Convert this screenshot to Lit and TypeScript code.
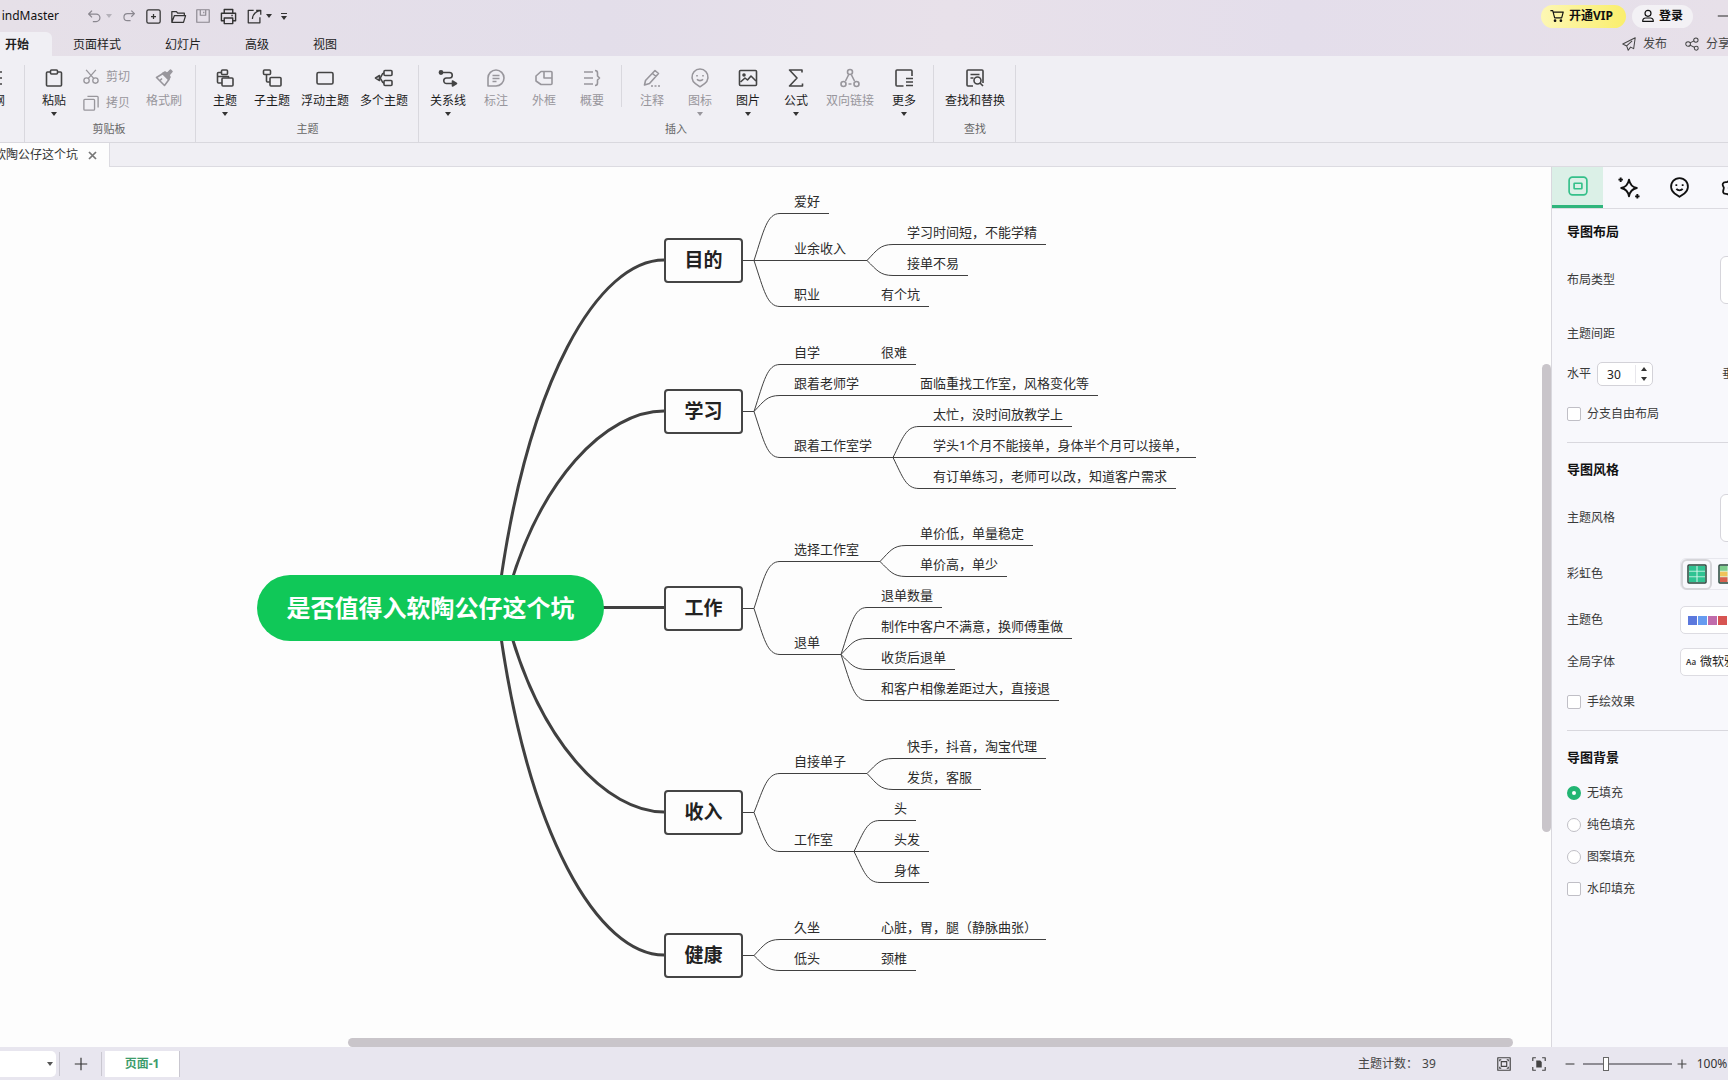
import { LitElement, html, svg, css, nothing, type TemplateResult } from "lit";
import { customElement, property } from "lit/decorators.js";
import { classMap } from "lit/directives/class-map.js";

/* ---------- icons, drawn on an 18 unit grid ---------- */

const ICONS: Record<string, TemplateResult> = {
  undo: svg`<path d="M6 2 2 6l4 4M2 6h9a4.500 4.500 0 0 1 0 9H7"/>`,
  redo: svg`<path d="m12 2 4 4-4 4M16 6H7a4.500 4.500 0 0 0 0 9h4"/>`,
  newFile: svg`<rect x="1" y="1" width="16" height="16" rx="2"/><path d="M9 6v6M6 9h6"/>`,
  folder: svg`<path d="M1 16V3h5.500L8 5h8v3M1 16 4 8h13.500L15 16z"/>`,
  save: svg`<path d="M1 1h16v16H1zM5.500 1v7h7V1M10 3.500v2"/>`,
  print: svg`<path d="M4.500 5.500v-4h9v4M4.500 13.500h-3v-8h15v8h-3M4.500 10.500h9v6h-9zM12 8h1.500"/>`,
  exportFile: svg`<path d="M8 1.500H1.500v15h14V10M11 1.500h5.500V7M16 2C10 3 7 6 6.500 12"/>`,
  outline: svg`<path d="M2 3h16M2 9h16M2 15h16"/>`,
  paste: svg`<path d="M5.500 3H2.500a1 1 0 0 0-1 1v12a1 1 0 0 0 1 1h13a1 1 0 0 0 1-1V4a1 1 0 0 0-1-1h-3"/><rect x="5.500" y="1" width="7" height="4" rx="1"/>`,
  cut: svg`<circle cx="4" cy="13" r="3"/><circle cx="14" cy="13" r="3"/><path d="M3.500 1 12 10.500M14.500 1 6 10.500"/>`,
  copy: svg`<rect x="1" y="5" width="12" height="12" rx="1"/><path d="M5 1.500h11a1 1 0 0 1 1 1V14"/>`,
  brush: svg`<path d="M1.500 8.500 9.500 16.500l4.500-6-6-6z"/><path d="M7.500 4.500 10 3l2 1.500L15.500 1l1.500 1.500L14 6l1 2-1.500 2.500z" fill="currentColor"/><path d="M5 11.500 7 9.500"/>`,
  topic: svg`<path d="M5.500 3.500H2.500a1 1 0 0 0-1 1V13a1 1 0 0 0 1 1H6"/><rect x="5.500" y="1" width="6" height="4.500" rx="1"/><rect x="6" y="9" width="11" height="8" rx="1"/><path d="M2 7.500h10.500V9"/>`,
  subtopic: svg`<rect x="0.500" y="1" width="7" height="4.500" rx="1"/><path d="M3.500 5.500V12a1 1 0 0 0 1 1H7"/><rect x="7" y="8.500" width="11" height="8.500" rx="1"/>`,
  floating: svg`<rect x="1" y="3.500" width="16" height="11.500" rx="1.500"/>`,
  multi: svg`<path d="M4.500 6.500 0.500 9l4 2.500z"/><path d="M4.500 9C7 9 6 4 9 4M4.500 9C7 9 6 14 9 14"/><rect x="9" y="1.500" width="8" height="5" rx="1"/><rect x="9" y="11.500" width="8" height="5" rx="1"/>`,
  relation: svg`<circle cx="2" cy="3.500" r="1.600" fill="currentColor"/><path d="M2 3.500h8.500a2.700 2.700 0 0 1 0 5.500H7.500a2.700 2.700 0 0 0 0 5.500H14"/><path d="M13.500 12v5l4-2.500z" fill="currentColor"/>`,
  callout: svg`<path d="M1 17V9a8 8 0 1 1 8 8zM5.500 6.500h7M5.500 9.500h7M5.500 12.500h4"/>`,
  boundary: svg`<path d="M6 2.500h10a1 1 0 0 1 1 1v11a1 1 0 0 1-1 1H6L1 12V7zM9 2.500V9h8"/>`,
  summary: svg`<path d="M1 3h9M1 9h9M1 15h9M12 1.500c2 0 2.500.8 2.500 2.500v3l2 2-2 2v3c0 1.700-.5 2.500-2.500 2.500"/>`,
  note: svg`<path d="M1.500 16l1-4.500L12 1.500l3.500 3L6.500 14.500zM9.500 4.500 13 7.500"/><path d="M8 17h10" stroke-dasharray="2 1.500"/>`,
  pin: svg`<path d="M9 17.800 4.400 14.600A8 8 0 1 1 13.600 14.600z"/><path d="M6 6v1.500M12 6v1.500M6 10.300c1.500 1.800 4.500 1.800 6 0"/>`,
  image: svg`<rect x="0.500" y="1.500" width="17" height="15" rx="1"/><circle cx="5" cy="6" r="1" fill="currentColor"/><path d="M1.500 13 6 9l2.500 2 3.500-4 5 5"/>`,
  formula: svg`<path d="M15 3.500V1H2.500L10 9l-7.500 8H15.500v-2.500"/>`,
  link: svg`<circle cx="9" cy="3" r="2.500"/><circle cx="2.500" cy="15" r="2.500"/><circle cx="15.500" cy="15" r="2.500"/><path d="M7.500 6 4.500 12M10.500 6l3 6M7.500 15h3"/>`,
  more: svg`<path d="M8.500 17H2a1 1 0 0 1-1-1V2a1 1 0 0 1 1-1h14a1 1 0 0 1 1 1v5M11 9.500h7M11 13h7M11 16.500h7"/>`,
  find: svg`<path d="M7 17H2a1 1 0 0 1-1-1V2a1 1 0 0 1 1-1h14a1 1 0 0 1 1 1v12M4.500 5.500h9M4.500 9h3"/><circle cx="11.500" cy="11.500" r="3.500"/><path d="m14 14 3 3"/>`,
  cart: svg`<path d="M0.500 2h3l2.500 9.500h9L17 4H4.500"/><circle cx="6.500" cy="15" r="1" fill="currentColor"/><circle cx="14" cy="15" r="1" fill="currentColor"/>`,
  user: svg`<circle cx="9" cy="5" r="4.500"/><path d="M1 17c0-3.500 2-5 4.500-5h7c2.500 0 4.500 1.500 4.500 5z"/>`,
  send: svg`<path d="M17 1 1 9l5 2.500L8 17l3-4 4 2zM6 11.500 13 5"/>`,
  share: svg`<circle cx="4" cy="9" r="3"/><circle cx="14" cy="4" r="2.800"/><circle cx="14.500" cy="14.500" r="2.500"/><path d="m6.500 7.500 5-2.500M6.500 10.500l6 3"/>`,
  minimise: svg`<path d="M1 9h16"/>`,
  layout: svg`<rect x="1" y="1" width="16" height="16" rx="3"/><rect x="5.500" y="6.500" width="7" height="5" rx="0.500"/>`,
  spark: svg`<path d="M9 1.500c.8 4.500 3 6.700 7 7.500-4 .8-6.200 3-7 7.500-.8-4.500-3-6.700-7-7.500 4-.8 6.200-3 7-7.500z"/><path d="M1.500-.5v4M-.5 1.500h4M16.500 14.500v4M14.500 16.500h4"/>`,
  flower: svg`<path d="M9 1.500c2 0 2.500 1.500 3.500 2 1.500.3 3.500 0 4 2 .5 1.500-.8 2.500-1 3.500.2 1 1.500 2.500.5 4.500-1 1.500-3 .5-4 1-1 .7-1.500 2-3 2s-2-1.500-3-2c-1.500-.5-3.500.3-4-1.500-.5-1.800.8-3 .5-4.500-.5-1-1.500-2-.8-3.500.8-1.500 2.800-1 4-1.500 1-.5 1.500-2 3.300-2z"/><circle cx="9" cy="9" r="2"/>`,
  fit: svg`<rect x="1" y="1" width="16" height="16"/><rect x="5.500" y="6" width="7" height="6"/><path d="M3.500 5.500v-2h2M14.500 5.500v-2h-2M3.500 12.500v2h2M14.500 12.500v2h-2"/>`,
  focus: svg`<path d="M1 5V1h4M13 1h4v4M17 13v4h-4M5 17H1v-4"/><path d="M5.500 4.500h5l2 2v7h-7z" fill="currentColor" stroke="none"/>`,
  plus: svg`<path d="M9 1v16M1 9h16"/>`,
  minus: svg`<path d="M1 9h16"/>`,
  close: svg`<path d="m2 2 14 14M16 2 2 16"/>`,
};

const icon = (name: string, size = 18, stroke = 1.5) => html`<svg
  width=${size}
  height=${size}
  viewBox="0 0 18 18"
  fill="none"
  stroke="currentColor"
  stroke-width=${stroke}
  stroke-linejoin="round"
  overflow="visible"
  aria-hidden="true"
>${ICONS[name]}</svg>`;

const FONT = css`
  :host {
    font-family: "Noto Sans", "Noto Sans CJK SC", sans-serif;
    font-size: 12px;
    line-height: 16px;
    color: #222;
  }
  * {
    box-sizing: border-box;
  }
  svg {
    display: block;
    flex: none;
  }
  button {
    font: inherit;
    color: inherit;
    background: none;
    border: 0;
    padding: 0;
    margin: 0;
    white-space: nowrap;
  }
  .caret {
    width: 0;
    height: 0;
    border: 3px solid transparent;
    border-top: 4px solid currentColor;
    border-bottom: 0;
    flex: none;
  }
`;

/* ---------- title bar ---------- */

@customElement("title-bar")
class TitleBar extends LitElement {
  static styles = [
    FONT,
    css`
      :host {
        display: block;
        background: linear-gradient(90deg, #e6e0e8, #e3deea 35%, #e8e1ea 55%, #e4deeb 75%, #e7e0e9);
      }
      .row {
        display: flex;
        align-items: center;
        justify-content: space-between;
        height: 32px;
      }
      .tabs {
        height: 24px;
      }
      .left,
      .right,
      .quick {
        display: flex;
        align-items: center;
        flex: none;
      }
      .name {
        width: 59px;
        text-align: right;
        color: #111;
        margin-right: 28px;
      }
      .quick {
        gap: 10px;
        color: #333;
      }
      .quick button {
        display: flex;
        align-items: center;
        gap: 4px;
      }
      .dim {
        color: #8a878f;
      }
      .faint {
        color: #b5b2ba;
      }
      .quick .overflow {
        border-top: 1px solid #333;
        padding-top: 2px;
        margin-left: -1px;
      }
      .right {
        width: 187px;
        overflow: hidden;
      }
      .pill {
        display: flex;
        align-items: center;
        gap: 5px;
        height: 23px;
        border-radius: 12px;
        padding: 0 10px;
        background: #f3f1f5;
        font-weight: 700;
        color: #111;
        margin-right: 6px;
        flex: none;
      }
      .vip {
        background: linear-gradient(90deg, #fdf7b4, #faee6c);
        padding: 0 13px 0 9px;
      }
      .minimise {
        margin-left: 18px;
        color: #444;
      }
      nav {
        display: flex;
        height: 24px;
      }
      nav button {
        padding: 2px 22px 0;
        color: #222;
      }
      nav .active {
        padding: 2px 23px 0 5px;
        margin-right: -1px;
        font-weight: 700;
        background: #f0eff4;
        border-radius: 0 6px 0 0;
      }
      .share {
        width: 106px;
        gap: 18px;
      }
      .share button {
        display: flex;
        align-items: center;
        gap: 7px;
        color: #444;
        flex: none;
      }
    `,
  ];

  render() {
    return html`
      <div class="row">
        <div class="left">
          <span class="name">indMaster</span>
          <div class="quick">
            <button class="dim" aria-label="撤销">${icon("undo", 15)}<span class="caret faint"></span></button>
            <button class="dim" aria-label="重做">${icon("redo", 14)}</button>
            <button aria-label="新建">${icon("newFile", 15)}</button>
            <button aria-label="打开">${icon("folder", 15)}</button>
            <button class="dim" aria-label="保存">${icon("save", 14)}</button>
            <button aria-label="打印">${icon("print", 17)}</button>
            <button aria-label="导出">${icon("exportFile", 15)}<span class="caret"></span></button>
            <button class="overflow" aria-label="更多"><span class="caret"></span></button>
          </div>
        </div>
        <div class="right">
          <button class="pill vip">${icon("cart", 14)}开通VIP</button>
          <button class="pill">${icon("user", 12, 1.8)}登录</button>
          <button class="minimise" aria-label="最小化">${icon("minimise", 14)}</button>
        </div>
      </div>
      <div class="row tabs">
        <nav>
          ${["开始", "页面样式", "幻灯片", "高级", "视图"].map(
            (t, i) => html`<button class=${classMap({ active: i === 0 })}>${t}</button>`
          )}
        </nav>
        <div class="right share">
          <button>${icon("send", 14, 1.3)}发布</button>
          <button>${icon("share", 14, 1.3)}分享</button>
        </div>
      </div>
    `;
  }
}

/* ---------- ribbon ---------- */

interface Tool {
  label: string;
  icon: string;
  off?: boolean;
  menu?: boolean;
  divider?: boolean;
}

@customElement("ribbon-bar")
class RibbonBar extends LitElement {
  static styles = [
    FONT,
    css`
      :host {
        display: flex;
        height: 87px;
        padding-top: 9px;
        background: #f0eff4;
        border-bottom: 1px solid #d9d8de;
        overflow: hidden;
      }
      .group {
        display: flex;
        flex-direction: column;
        flex: none;
        padding: 4px 10px 0 11px;
        border-right: 1px solid #d9d8de;
      }
      .cut {
        width: 25px;
        padding: 4px 19px 0 0;
        align-items: flex-end;
      }
      .tools {
        display: flex;
        gap: 11px;
        height: 52px;
      }
      .insert {
        padding: 4px 11px 0 11px;
      }
      .insert .tools {
        gap: 12px;
      }
      .clip {
        padding: 4px 13px 0 11px;
      }
      .name {
        text-align: center;
        font-size: 11px;
        color: #666;
      }
      .tool {
        display: flex;
        flex-direction: column;
        align-items: center;
        min-width: 36px;
        color: #444;
      }
      .tool span {
        margin-top: 6px;
        color: #1c1c1c;
      }
      .tool .caret {
        margin-top: 3px;
        color: #333;
      }
      .off,
      .off span,
      .off .caret {
        color: #98969c;
      }
      .outline {
        min-width: 24px;
      }
      .stack {
        display: flex;
        flex-direction: column;
        gap: 10px;
        margin-right: 5px;
      }
      .stack button {
        display: flex;
        align-items: center;
        gap: 7px;
        color: #98969c;
      }
      .rule {
        width: 1px;
        height: 42px;
        margin-top: -4px;
        margin-left: -1px;
        background: #d9d8de;
      }
    `,
  ];

  private tool(t: Tool) {
    return html`${t.divider ? html`<div class="rule"></div>` : nothing}
      <button class=${classMap({ tool: true, off: !!t.off })}>
        ${icon(t.icon, 18, 1.6)}<span>${t.label}</span>${t.menu ? html`<i class="caret"></i>` : nothing}
      </button>`;
  }

  render() {
    const topics: Tool[] = [
      { label: "主题", icon: "topic", menu: true },
      { label: "子主题", icon: "subtopic" },
      { label: "浮动主题", icon: "floating" },
      { label: "多个主题", icon: "multi" },
    ];
    const inserts: Tool[] = [
      { label: "关系线", icon: "relation", menu: true },
      { label: "标注", icon: "callout", off: true },
      { label: "外框", icon: "boundary", off: true },
      { label: "概要", icon: "summary", off: true },
      { label: "注释", icon: "note", off: true, divider: true },
      { label: "图标", icon: "pin", off: true, menu: true },
      { label: "图片", icon: "image", menu: true },
      { label: "公式", icon: "formula", menu: true },
      { label: "双向链接", icon: "link", off: true },
      { label: "更多", icon: "more", menu: true },
    ];
    return html`
      <div class="group cut">
        <button class="tool outline">${icon("outline", 18, 1.6)}<span>大纲</span></button>
      </div>
      <div class="group clip">
        <div class="tools">
          ${this.tool({ label: "粘贴", icon: "paste", menu: true })}
          <div class="stack">
            <button>${icon("cut", 16)}剪切</button>
            <button>${icon("copy", 16)}拷贝</button>
          </div>
          ${this.tool({ label: "格式刷", icon: "brush", off: true })}
        </div>
        <div class="name">剪贴板</div>
      </div>
      <div class="group">
        <div class="tools">${topics.map((t) => this.tool(t))}</div>
        <div class="name">主题</div>
      </div>
      <div class="group insert">
        <div class="tools">${inserts.map((t) => this.tool(t))}</div>
        <div class="name">插入</div>
      </div>
      <div class="group">
        <div class="tools">${this.tool({ label: "查找和替换", icon: "find" })}</div>
        <div class="name">查找</div>
      </div>
    `;
  }
}

/* ---------- mind map ---------- */

interface Leaf {
  text: string;
  y: number;
  children?: Leaf[];
}

const ROOT = { text: "是否值得入软陶公仔这个坑", y: 441 };

const BRANCHES: Leaf[] = [
  {
    text: "目的",
    y: 93,
    children: [
      { text: "爱好", y: 46 },
      {
        text: "业余收入",
        y: 93,
        children: [
          { text: "学习时间短，不能学精", y: 77 },
          { text: "接单不易", y: 108 },
        ],
      },
      { text: "职业", y: 139, children: [{ text: "有个坑", y: 139 }] },
    ],
  },
  {
    text: "学习",
    y: 244,
    children: [
      { text: "自学", y: 197, children: [{ text: "很难", y: 197 }] },
      { text: "跟着老师学", y: 228, children: [{ text: "面临重找工作室，风格变化等", y: 228 }] },
      {
        text: "跟着工作室学",
        y: 290,
        children: [
          { text: "太忙，没时间放教学上", y: 259 },
          { text: "学头1个月不能接单，身体半个月可以接单，", y: 290 },
          { text: "有订单练习，老师可以改，知道客户需求", y: 321 },
        ],
      },
    ],
  },
  {
    text: "工作",
    y: 441,
    children: [
      {
        text: "选择工作室",
        y: 394,
        children: [
          { text: "单价低，单量稳定", y: 378 },
          { text: "单价高，单少", y: 409 },
        ],
      },
      {
        text: "退单",
        y: 487,
        children: [
          { text: "退单数量", y: 440 },
          { text: "制作中客户不满意，换师傅重做", y: 471 },
          { text: "收货后退单", y: 502 },
          { text: "和客户相像差距过大，直接退", y: 533 },
        ],
      },
    ],
  },
  {
    text: "收入",
    y: 645,
    children: [
      {
        text: "自接单子",
        y: 606,
        children: [
          { text: "快手，抖音，淘宝代理", y: 591 },
          { text: "发货，客服", y: 622 },
        ],
      },
      {
        text: "工作室",
        y: 684,
        children: [
          { text: "头", y: 653 },
          { text: "头发", y: 684 },
          { text: "身体", y: 715 },
        ],
      },
    ],
  },
  {
    text: "健康",
    y: 788,
    children: [
      { text: "久坐", y: 772, children: [{ text: "心脏，胃，腿（静脉曲张）", y: 772 }] },
      { text: "低头", y: 803, children: [{ text: "颈椎", y: 803 }] },
    ],
  },
];

const CHAR = 13;
const BOX_LEFT = 664;
const BOX_RIGHT = 743;
const JOIN = 11;
const INDENT = 40;

const textWidth = (s: string) => [...s].reduce((w, c) => w + (c.charCodeAt(0) < 128 ? 7 : CHAR), 0);

@customElement("mind-map")
class MindMap extends LitElement {
  static styles = [
    FONT,
    css`
      :host {
        display: block;
        position: relative;
        overflow: hidden;
        background: #fdfdfd;
      }
      .lines {
        position: absolute;
        inset: 0;
        width: 100%;
        height: 100%;
        fill: none;
        stroke: #404040;
      }
      .main {
        stroke-width: 3;
      }
      .node {
        position: absolute;
        white-space: nowrap;
      }
      .leaf {
        height: 18px;
        margin-top: -21px;
        font-size: 13px;
        line-height: 18px;
        color: #2b2b2b;
      }
      .branch {
        width: 79px;
        height: 45px;
        margin-top: -22px;
        border: 2px solid #454545;
        border-radius: 4px;
        background: #fdfdfd;
        font-size: 19px;
        font-weight: 700;
        line-height: 41px;
        text-align: center;
        color: #222;
      }
      .root {
        width: 347px;
        height: 66px;
        margin-top: -33px;
        border-radius: 33px;
        background: #10c858;
        color: #fff;
        font-size: 24px;
        font-weight: 700;
        line-height: 66px;
        text-align: center;
      }
      .thumb {
        position: absolute;
        background: #c9c5ca;
        border-radius: 5px;
      }
      .vertical {
        right: 0;
        top: 197px;
        width: 9px;
        height: 468px;
      }
      .horizontal {
        bottom: 0;
        left: 348px;
        right: 38px;
        height: 9px;
      }
    `,
  ];

  private lines: TemplateResult[] = [];
  private nodes: TemplateResult[] = [];

  private place(items: Leaf[], x: number, fromY: number) {
    const left = x + INDENT;
    for (const item of items) {
      const end = left + textWidth(item.text) + (item.children ? 10 + JOIN : 9);
      const y = item.y + 0.5;
      const y0 = fromY + 0.5;
      const dy = y - y0;
      this.lines.push(
        dy === 0
          ? svg`<path d="M${x} ${y}H${end}"/>`
          : svg`<path d="M${x} ${y0}C${x + 10} ${y0 + dy * 0.65} ${x + 13} ${y} ${x + 26} ${y}H${end}"/>`
      );
      this.nodes.push(
        html`<div class="node leaf" style="left:${left}px;top:${item.y}px">${item.text}</div>`
      );
      if (item.children) this.place(item.children, end, item.y);
    }
  }

  private trunk(y: number) {
    const dy = y - ROOT.y;
    if (dy === 0) return svg`<path class="main" d="M600 ${y - 0.5}H${BOX_LEFT}"/>`;
    const [start, c1, c2] = Math.abs(dy) > 250 ? [497, 526, 600] : [504, 537, 608];
    return svg`<path class="main" d="M${start} ${ROOT.y}C${c1} ${ROOT.y + (dy * 2) / 3} ${c2} ${y} ${BOX_LEFT} ${y}"/>`;
  }

  render() {
    this.lines = [];
    this.nodes = [];
    for (const b of BRANCHES) {
      this.lines.push(this.trunk(b.y));
      this.lines.push(svg`<path d="M${BOX_RIGHT} ${b.y + 0.5}h${JOIN}"/>`);
      this.nodes.push(html`<div class="node branch" style="left:${BOX_LEFT}px;top:${b.y}px">${b.text}</div>`);
      this.place(b.children ?? [], BOX_RIGHT + JOIN, b.y);
    }
    return html`
      <svg class="lines">${this.lines}</svg>
      ${this.nodes}
      <div class="node root" style="left:257px;top:${ROOT.y}px">${ROOT.text}</div>
      <div class="thumb vertical"></div>
      <div class="thumb horizontal"></div>
    `;
  }
}

/* ---------- side panel ---------- */

@customElement("side-panel")
class SidePanel extends LitElement {
  static styles = [
    FONT,
    css`
      :host {
        display: block;
        overflow: hidden;
        background: #f8f8fc;
        border-left: 1px solid #d9d8de;
        color: #3a3a3a;
      }
      .tabs {
        display: flex;
        height: 42px;
        border-bottom: 1px solid #dcdbe1;
        color: #111;
      }
      .tabs button {
        width: 51px;
        flex: none;
        display: flex;
        align-items: center;
        justify-content: center;
      }
      .tabs .active {
        color: #35c08a;
        background: #dbf0e7;
        border-bottom: 3px solid #2fb57c;
      }
      section {
        margin-left: 15px;
        padding: 12px 0 9px;
        border-bottom: 1px solid #d9d8de;
      }
      section:first-of-type {
        padding-top: 8px;
      }
      section:last-of-type {
        border: 0;
      }
      section:last-of-type h2 {
        margin-bottom: 6px;
      }
      h2 {
        margin: 0;
        height: 28px;
        font-size: 13px;
        line-height: 28px;
        font-weight: 700;
        color: #111;
      }
      .row {
        display: flex;
        align-items: center;
        white-space: nowrap;
        height: 32px;
      }
      .tall {
        height: 70px;
      }
      .mid {
        height: 42px;
      }
      .colors {
        margin-bottom: 4px;
      }
      .short {
        height: 38px;
      }
      .row > * {
        flex: none;
      }
      .label {
        width: 113px;
      }
      .wide {
        width: 153px;
      }
      .preview {
        width: 100px;
        height: 48px;
        border: 1px solid #d6d5db;
        border-radius: 6px;
        background: #fff;
      }
      .spin {
        display: flex;
        align-items: center;
        width: 56px;
        height: 24px;
        margin: 0 69px 0 6px;
        border: 1px solid #d3d2d8;
        border-radius: 5px;
        background: #fff;
      }
      .spin input {
        width: 38px;
        height: 18px;
        padding: 0 0 0 9px;
        border: 0;
        border-right: 1px solid #e8e7ec;
        background: none;
        font: inherit;
        font-size: 12px;
        color: #222;
        appearance: textfield;
        outline: 0;
      }
      .spin input::-webkit-inner-spin-button {
        appearance: none;
      }
      .arrows {
        display: flex;
        flex-direction: column;
        gap: 6px;
        margin-left: 5px;
      }
      .arrows button {
        height: 4px;
        color: #333;
      }
      .arrows .caret {
        display: block;
      }
      .up {
        rotate: 180deg;
      }
      .rainbow {
        display: flex;
        align-items: center;
        width: 160px;
        height: 32px;
        border: 1px solid #e8e8ee;
        border-radius: 6px;
      }
      .rainbow button {
        width: 31px;
        height: 31px;
        display: grid;
        place-items: center;
        border-radius: 6px;
      }
      .rainbow .active {
        border: 2px solid #d6d6da;
      }
      .field {
        display: flex;
        align-items: center;
        width: 160px;
        height: 28px;
        padding: 0 5px;
        border: 1px solid #dddce2;
        border-radius: 5px;
        background: #fff;
      }
      .swatch {
        width: 9px;
        height: 9px;
        margin-right: 1px;
      }
      .swatch:first-child {
        margin-left: 2px;
      }
      .aa {
        width: 14px;
        font-size: 8px;
        font-weight: 600;
      }
      select {
        appearance: none;
        border: 0;
        background: none;
        font: inherit;
        color: #222;
        padding: 0;
        width: 120px;
      }
      .check {
        gap: 6px;
      }
      .check input {
        appearance: none;
        width: 14px;
        height: 14px;
        margin: 0;
        border: 1px solid #c0bfc6;
        border-radius: 2px;
        background: #fff;
      }
      .check input[type="radio"] {
        border-radius: 50%;
      }
      .check input[type="radio"]:checked {
        border: 5px solid #22b573;
      }
    `,
  ];

  private check(id: string, text: string, type = "checkbox", size = "", checked = false) {
    return html`<div class="row check ${size}">
      <input type=${type} id=${id} name=${type === "radio" ? "fill" : id} ?checked=${checked} />
      <label for=${id}>${text}</label>
    </div>`;
  }

  private grid(colors: string[]) {
    return html`<svg width="20" height="20" viewBox="0 0 20 20" aria-hidden="true">
      <rect x="1" y="1" width="18" height="18" rx="1" fill="#d9f7ec" stroke="#29453b" stroke-width="1.500" />
      ${colors.map(
        (c, i) => svg`<rect x="2" y=${2 + i * 5.6} width="7.500" height="4.800" fill=${c}/><rect x="10.500" y=${2 + i * 5.6} width="7.500" height="4.800" fill=${c}/>`
      )}
    </svg>`;
  }

  render() {
    return html`
      <div class="tabs">
        <button class="active" aria-label="布局">${icon("layout", 20)}</button>
        <button aria-label="智能">${icon("spark", 20, 1.7)}</button>
        <button aria-label="图标">${icon("pin", 19, 1.7)}</button>
        <button aria-label="剪贴画">${icon("flower", 20, 1.6)}</button>
      </div>
      <section>
        <h2>导图布局</h2>
        <div class="row tall"><span class="label wide">布局类型</span><button class="preview" aria-label="布局类型"></button></div>
        <div class="row short">主题间距</div>
        <div class="row mid">
          <label for="h-gap">水平</label>
          <div class="spin">
            <input id="h-gap" type="number" value="30" />
            <div class="arrows">
              <button aria-label="增加"><i class="caret up"></i></button>
              <button aria-label="减少"><i class="caret"></i></button>
            </div>
          </div>
          <span>垂直</span>
        </div>
        ${this.check("free", "分支自由布局", "checkbox", "short")}
      </section>
      <section>
        <h2>导图风格</h2>
        <div class="row tall"><span class="label wide">主题风格</span><button class="preview" aria-label="主题风格"></button></div>
        <div class="row mid colors">
          <span class="label">彩虹色</span>
          <div class="rainbow">
            <button class="active" aria-label="单色">${this.grid(["#2fc392", "#2fc392", "#2fc392"])}</button>
            <button aria-label="彩色">${this.grid(["#7fce8e", "#f0c35a", "#d9604f"])}</button>
          </div>
        </div>
        <div class="row mid">
          <span class="label">主题色</span>
          <button class="field" aria-label="主题色">
            ${["#5b78dd", "#669bf0", "#c06bab", "#d75452", "#7a4f9e", "#4f9e8a"].map(
              (c) => html`<span class="swatch" style="background:${c}"></span>`
            )}
          </button>
        </div>
        <div class="row mid">
          <label class="label" for="font">全局字体</label>
          <div class="field">
            <span class="aa">Aa</span>
            <select id="font"><option>微软雅黑</option></select>
          </div>
        </div>
        ${this.check("sketch", "手绘效果", "checkbox", "short")}
      </section>
      <section>
        <h2>导图背景</h2>
        ${this.check("none", "无填充", "radio", "", true)} ${this.check("solid", "纯色填充", "radio")}
        ${this.check("pattern", "图案填充", "radio")} ${this.check("mark", "水印填充")}
      </section>
    `;
  }
}

/* ---------- status bar ---------- */

@customElement("status-bar")
class StatusBar extends LitElement {
  @property({ type: Number }) count = 39;

  static styles = [
    FONT,
    css`
      :host {
        display: flex;
        align-items: center;
        justify-content: space-between;
        height: 33px;
        background: #e8e6ef;
        color: #444;
      }
      .side {
        display: flex;
        align-items: center;
        height: 26px;
        flex: none;
      }
      .picker {
        display: flex;
        align-items: center;
        width: 56px;
        height: 26px;
        margin-right: 3px;
        padding-right: 3px;
        background: #fff;
        border-radius: 0 5px 5px 0;
        color: #555;
      }
      .picker select {
        appearance: none;
        flex: 1;
        min-width: 0;
        height: 100%;
        border: 0;
        background: none;
      }
      .add {
        display: grid;
        place-items: center;
        width: 43px;
        height: 24px;
        border: solid #c9c7d0;
        border-width: 0 1px;
        color: #333;
      }
      .page {
        height: 26px;
        width: 75px;
        margin-left: 3px;
        background: #fff;
        border-right: 1px solid #c9c7d0;
        color: #3d9c6c;
        font-weight: 700;
      }
      .right {
        width: 370px;
        white-space: nowrap;
      }
      .right > * {
        flex: none;
      }
      .count {
        margin-right: 4px;
      }
      .fit {
        margin-left: 61px;
      }
      .focus {
        margin: 0 19px 0 21px;
      }
      input {
        appearance: none;
        width: 89px;
        height: 14px;
        margin: 0 5px 0 8px;
        background: linear-gradient(#8e8c94, #8e8c94) center / 100% 2px no-repeat;
      }
      input::-webkit-slider-thumb {
        appearance: none;
        width: 6px;
        height: 14px;
        border: 1px solid #666;
        background: #fff;
      }
      .zoom {
        margin-left: 10px;
        color: #333;
      }
    `,
  ];

  render() {
    return html`
      <div class="side">
        <div class="picker">
          <select aria-label="页面列表"></select>
          <i class="caret"></i>
        </div>
        <button class="add" aria-label="添加页面">${icon("plus", 14)}</button>
        <button class="page">页面-1</button>
      </div>
      <div class="side right">
        <span class="count">主题计数：</span><span>${this.count}</span>
        <button class="fit" aria-label="适合窗口">${icon("fit", 14)}</button>
        <button class="focus" aria-label="聚焦">${icon("focus", 14)}</button>
        <button aria-label="缩小">${icon("minus", 10, 2)}</button>
        <input type="range" min="0" max="100" value="24" aria-label="缩放" />
        <button aria-label="放大">${icon("plus", 10, 2)}</button>
        <span class="zoom">100%</span>
      </div>
    `;
  }
}

/* ---------- page ---------- */

@customElement("app-root")
class AppRoot extends LitElement {
  static styles = [
    FONT,
    css`
      :host {
        display: flex;
        flex-direction: column;
        min-height: 100vh;
        overflow: hidden;
      }
      .files {
        display: flex;
        height: 24px;
        background: #f0eff4;
        border-bottom: 1px solid #dcdbe1;
      }
      .file {
        display: flex;
        align-items: center;
        width: 110px;
        height: 24px;
        padding-right: 12px;
        background: #fdfdfd;
        border-right: 1px solid #dcdbe1;
        color: #333;
      }
      .title {
        flex: 1;
        min-width: 0;
        display: flex;
        justify-content: flex-end;
        overflow: hidden;
        white-space: nowrap;
        margin-right: 10px;
      }
      .file button {
        color: #777;
      }
      .work {
        display: grid;
        grid-template-columns: minmax(0, 1fr) 177px;
        flex: 1;
      }
    `,
  ];

  render() {
    return html`
      <title-bar></title-bar>
      <ribbon-bar></ribbon-bar>
      <div class="files">
        <div class="file">
          <span class="title">软陶公仔这个坑</span>
          <button aria-label="关闭">${icon("close", 9, 3.5)}</button>
        </div>
      </div>
      <div class="work">
        <mind-map></mind-map>
        <side-panel></side-panel>
      </div>
      <status-bar></status-bar>
    `;
  }
}
